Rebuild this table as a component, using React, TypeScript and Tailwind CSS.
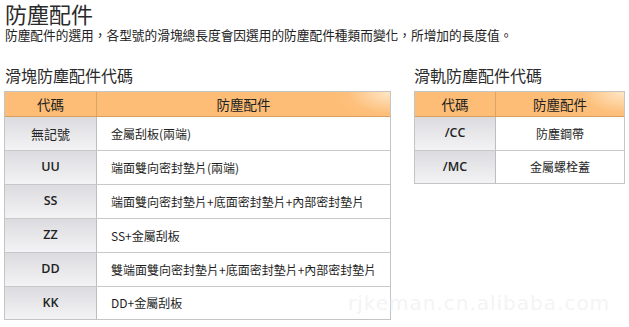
const font = { fontFamily: '"Noto Sans CJK TC", "Noto Sans", sans-serif' }

interface Row {
  code: string
  part: string
}

const sliderRows: Row[] = [
  { code: '無記號', part: '金屬刮板(兩端)' },
  { code: 'UU', part: '端面雙向密封墊片(兩端)' },
  { code: 'SS', part: '端面雙向密封墊片+底面密封墊片+內部密封墊片' },
  { code: 'ZZ', part: 'SS+金屬刮板' },
  { code: 'DD', part: '雙端面雙向密封墊片+底面密封墊片+內部密封墊片' },
  { code: 'KK', part: 'DD+金屬刮板' },
]

const railRows: Row[] = [
  { code: '/CC', part: '防塵鋼帶' },
  { code: '/MC', part: '金屬螺栓蓋' },
]

function Header({ codeWidth }: { codeWidth: string }) {
  return (
    <div className="flex h-[25px] border-b border-[#d99d5c] bg-[radial-gradient(ellipse_60px_30px_at_top_right,#ffe7c8_0%,#fdc07c_70%,#fdbd76_100%)] text-[13.5px] text-[#222]">
      <div className={`${codeWidth} flex items-center justify-center border-r border-[#d8a468]`}>代碼</div>
      <div className="flex flex-1 items-center justify-center">防塵配件</div>
    </div>
  )
}

function Table({ rows, codeWidth, width, center }: { rows: Row[]; codeWidth: string; width: string; center?: boolean }) {
  return (
    <div className={`${width} border border-[#c4c4c4] bg-white`}>
      <Header codeWidth={codeWidth} />
      {rows.map((r, i) => {
        const latin = /^[\/A-Z]+$/.test(r.code)
        return (
          <div
            key={r.code}
            className={`flex text-[12px] text-[#1e1e1e] ${i === rows.length - 1 ? 'h-[32px]' : 'h-[34px] border-b border-[#c8c8c8]'}`}
          >
            <div
              className={`${codeWidth} flex items-center justify-center border-r border-[#bdbdbd] bg-gradient-to-b from-[#dcdce0] to-[#f3f3f5] text-[#222] ${latin ? 'text-[12.5px] font-semibold' : 'text-[13px]'}`}
              style={latin ? { fontFamily: '"Open Sans", "Noto Sans CJK TC", sans-serif' } : undefined}
            >
              {r.code}
            </div>
            <div className={`flex flex-1 items-center ${center ? 'justify-center' : 'pl-[14px]'}`}>{r.part}</div>
          </div>
        )
      })}
    </div>
  )
}

export default function App() {
  return (
    <div className="relative h-[327px] w-[629px] overflow-hidden bg-white text-[#222]" style={font}>
      <div className="pl-[5px]">
        <h1 className="text-[22px] leading-[26px] text-[#2a2a2a]">防塵配件</h1>
        <p className="mt-[1px] text-[12.7px] leading-[15px]">
          防塵配件的選用，各型號的滑塊總長度會因選用的防塵配件種類而變化，所增加的長度值。
        </p>
      </div>

      <div className="mt-[25px] flex pl-[4px]">
        <div>
          <h2 className="pl-[1px] text-[16px] leading-[17px] text-[#2a2a2a]">滑塊防塵配件代碼</h2>
          <div className="mt-[7px]">
            <Table rows={sliderRows} codeWidth="w-[92px]" width="w-[387px]" />
          </div>
        </div>
        <div className="ml-[23px]">
          <h2 className="text-[16px] leading-[17px] text-[#2a2a2a]">滑軌防塵配件代碼</h2>
          <div className="mt-[7px]">
            <Table rows={railRows} codeWidth="w-[81px]" width="w-[211px]" center />
          </div>
        </div>
      </div>

      <div
        className="absolute left-[348px] top-[288px] text-[20px] tracking-[1px] text-[#f4f4f4]"
        style={{ fontFamily: '"DejaVu Sans", sans-serif' }}
      >
        rjkeman.cn.alibaba.com
      </div>
    </div>
  )
}
